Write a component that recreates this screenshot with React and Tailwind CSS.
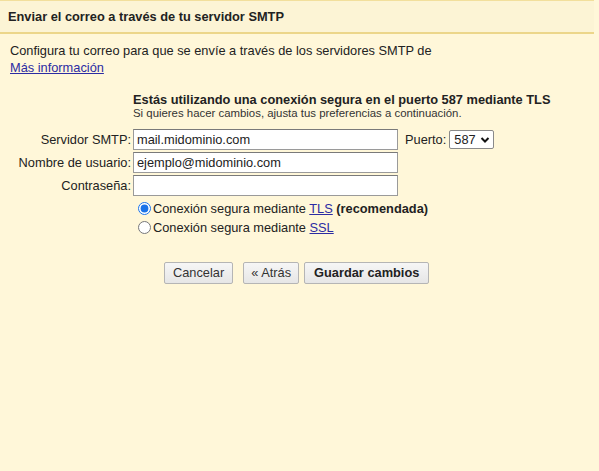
import React, { useState } from 'react';

function Field({ label, value, type = 'text' }) {
  return (
    <>
      <div className="h-[21px] flex items-center justify-end pr-[2px]">{label}</div>
      <input
        type={type}
        defaultValue={value}
        className="h-[21px] w-[265px] border border-[#9a9a9a] border-t-[#7a7a7a] bg-white px-[3px] text-[12.8px] text-[#222] outline-none"
        style={{ fontFamily: '"Liberation Sans", Arial, sans-serif' }}
      />
    </>
  );
}

export default function App() {
  const [mode, setMode] = useState('tls');

  return (
    <div
      className="min-h-[471px] bg-[#fff7d9] text-[12.8px] text-[#222]"
      style={{ fontFamily: '"Liberation Sans", Arial, sans-serif' }}
    >
      <div className="mr-[5px] flex h-[34px] items-center border-t border-b-2 border-t-[#f2df9c] border-b-[#ecd68a] bg-[#fcf4d5] px-[8px] font-bold">
        Enviar el correo a través de tu servidor SMTP
      </div>

      <div className="mt-[8px] px-[10px] leading-[17px]">
        <div>Configura tu correo para que se envíe a través de los servidores SMTP de</div>
        <a href="#" className="text-[#2c2ca3] underline">Más información</a>
      </div>

      <div className="mt-[16px] pl-[133px]">
        <div className="font-bold leading-[15px]">Estás utilizando una conexión segura en el puerto 587 mediante TLS</div>
        <div className="text-[11.4px] leading-[12px] text-[#333]">Si quieres hacer cambios, ajusta tus preferencias a continuación.</div>
      </div>

      <div className="mt-[10px] grid grid-cols-[133px_auto_1fr] gap-y-[2px]">
        <Field label="Servidor SMTP:" value="mail.midominio.com" />
        <div className="flex h-[21px] items-center pl-[7px]">
          <span>Puerto:</span>
          <div className="ml-[3px] flex h-[19px] w-[45px] items-center justify-between rounded-[2px] border border-[#8a8a8a] bg-white pl-[4px] pr-[3px]">
            <span>587</span>
            <svg width="10" height="8" viewBox="0 0 10 8">
              <path d="M1.5 2 L5 5.5 L8.5 2" fill="none" stroke="#111" strokeWidth="2" />
            </svg>
          </div>
        </div>
        <Field label="Nombre de usuario:" value="ejemplo@midominio.com" />
        <div />
        <Field label="Contraseña:" value="" type="password" />
        <div />
      </div>

      <div className="mt-[3px] pl-[138px] leading-[19px]">
        <label className="flex items-center">
          <input
            type="radio"
            name="mode"
            checked={mode === 'tls'}
            onChange={() => setMode('tls')}
            className="m-0 mr-[2px] h-[13px] w-[13px] accent-[#1a73e8]"
          />
          <span>
            Conexión segura mediante <a href="#" className="text-[#2c2ca3] underline">TLS</a>{' '}
            <b>(recomendada)</b>
          </span>
        </label>
        <label className="flex items-center">
          <input
            type="radio"
            name="mode"
            checked={mode === 'ssl'}
            onChange={() => setMode('ssl')}
            className="m-0 mr-[2px] h-[13px] w-[13px] accent-[#1a73e8]"
          />
          <span>
            Conexión segura mediante <a href="#" className="text-[#2c2ca3] underline">SSL</a>
          </span>
        </label>
      </div>

      <div className="mt-[25px] flex pl-[164px]">
        <button className="h-[22px] rounded-[2px] border border-[#b5b5b5] bg-gradient-to-b from-[#f6f6f6] to-[#e6e6e6] px-[8px] text-[#333]">
          Cancelar
        </button>
        <button className="ml-[10px] h-[22px] rounded-[2px] border border-[#b5b5b5] bg-gradient-to-b from-[#f6f6f6] to-[#e6e6e6] px-[7px] text-[#333]">
          « Atrás
        </button>
        <button className="ml-[5px] h-[22px] rounded-[2px] border border-[#b5b5b5] bg-gradient-to-b from-[#f6f6f6] to-[#e6e6e6] px-[9px] font-bold text-[#222]">
          Guardar cambios
        </button>
      </div>
    </div>
  );
}
